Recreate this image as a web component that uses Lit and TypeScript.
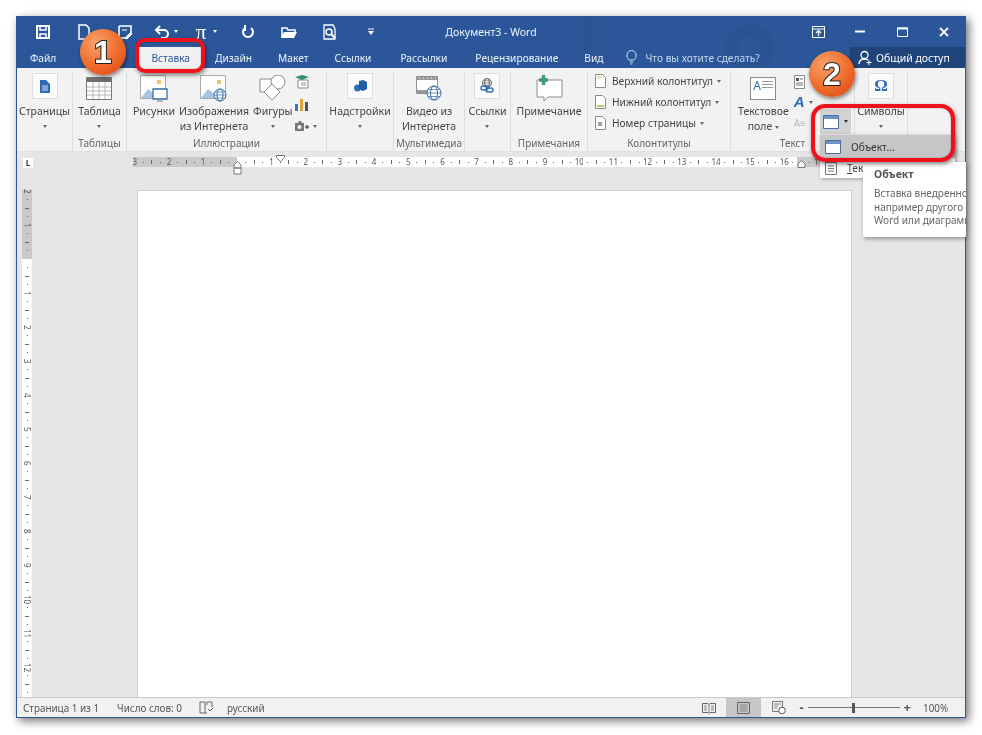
import { LitElement, css, html, svg } from "lit";
import { customElement } from "lit/decorators.js";

const BLUE = "#2b6cb5";

const icon = (w: number, h: number, body: unknown) =>
  html`<svg width=${w} height=${h} viewBox="0 0 ${w} ${h}" fill="none">${body}</svg>`;

const arrow = () => html`<span class="caret"></span>`;

// title bar icons
const qatSave = icon(16, 16, svg`<path d="M2 2h12v12H2z" stroke="#fff" stroke-width="2"/><path d="M5 2v4h6V2M5 14v-4h6v4" stroke="#fff" stroke-width="1.5"/>`);
const qatNew = icon(14, 16, svg`<path d="M2 1h7l3 3v11H2z" stroke="#fff" stroke-width="1.5"/>`);
const qatSaveAs = icon(16, 16, svg`<path d="M2 2h12v6M2 2v12h6" stroke="#fff" stroke-width="1.6"/><path d="M5 6h5M8 14l6-6 1 2-5 5z" fill="#dce6f4" stroke="#fff"/>`);
const qatUndo = icon(16, 14, svg`<path d="M6 1 2 5l4 4" stroke="#fff" stroke-width="2"/><path d="M3 5h7a4 4 0 0 1 0 8H7" stroke="#fff" stroke-width="2"/>`);
const qatRedo = icon(14, 14, svg`<path d="M10 3a5 5 0 1 1-6 0" stroke="#fff" stroke-width="2"/><path d="M4 0v5h1" stroke="#fff" stroke-width="2"/>`);
const qatOpen = icon(18, 14, svg`<path d="M2 12V3h5l1 2h7v2" stroke="#fff" stroke-width="1.5"/><path d="M1 13l3-6h13l-3 6z" fill="#fff"/>`);
const qatPreview = icon(14, 16, svg`<path d="M10 1H1v14h11V5z" stroke="#fff" stroke-width="1.3"/><circle cx="6" cy="8" r="3" stroke="#fff" stroke-width="1.5"/><path d="m8 10 4 4" stroke="#fff" stroke-width="2"/>`);
const qatCustom = icon(8, 8, svg`<path d="M1 1h6" stroke="#fff"/><path d="M1 3h6L4 7z" fill="#fff"/>`);
const restoreIcon = icon(13, 12, svg`<path d="M.5.5h12v11H.5z" stroke="#fff"/><path d="M1 3h11" stroke="#fff"/><path d="M6.5 10V5M4 7l2.5-2.5L9 7" stroke="#fff" stroke-width="1.3"/>`);
const minIcon = icon(10, 3, svg`<path d="M0 1.5h10" stroke="#fff" stroke-width="2"/>`);
const maxIcon = icon(11, 10, svg`<path d="M.5 1h10v8.5H.5z" stroke="#fff"/><path d="M0 1.5h11" stroke="#fff" stroke-width="2"/>`);
const closeIcon = icon(10, 10, svg`<path d="m1 1 8 8M9 1 1 9" stroke="#fff" stroke-width="1.8"/>`);
const bulb = icon(11, 15, svg`<path d="M3 10C1 8 .8 6.5 1 5a4.5 4.5 0 0 1 9 0c.2 1.5 0 3-2 5z" stroke="#cfe0f5"/><path d="M4 12h3M4.5 14h2" stroke="#cfe0f5"/>`);
const person = icon(15, 16, svg`<circle cx="6.5" cy="5" r="3.5" stroke="#fff" stroke-width="1.3"/><path d="M1 14c0-4 2-5 5.500-5 1.500 0 2.500.3 3.500 1" stroke="#fff" stroke-width="1.3"/><path d="M11 10v5M8.5 12.500h5" stroke="#fff"/>`);

// ribbon icons
const pagesIcon = icon(10, 13, svg`<path d="M0 0h6l4 4v9H0z" fill="${BLUE}"/><path d="M2 6h6M2 8h6M2 10h6" stroke="#fff" stroke-width=".8"/>`);
const tableIcon = icon(26, 23, svg`<path d="M.5.5h25v22H.5z" fill="#fff" stroke="#777"/><path d="M1 1h24v4H1z" fill="#6f6f6f"/><path d="M1 10h24M1 14h24M1 18h24M7 5v17M13 5v17M19 5v17" stroke="#b8b8b8"/>`);
const picBase = svg`<path d="M.5.5h25v23H.5z" fill="#fff" stroke="#a9a9a9"/><path d="M1 23l7-9 5 4 5-3 7 6v2z" fill="#a9c4e2"/><rect x="17" y="5" width="4" height="4" fill="#e9c46a"/>`;
const picturesIcon = icon(28, 27, svg`${picBase}<path d="M13 14h14v10H13z" fill="#fff" stroke="#3a6ea5" stroke-width="1.3"/><path d="M17 26h6" stroke="#777"/>`);
const globe = (x: number, y: number, r: number, c: string) => svg`<circle cx=${x} cy=${y} r=${r} fill="#fff" stroke=${c}/><ellipse cx=${x} cy=${y} rx=${r / 2} ry=${r} stroke=${c}/><path d="M${x - r} ${y}h${2 * r}M${x - r + 1} ${y - r / 2}h${2 * r - 2}M${x - r + 1} ${y + r / 2}h${2 * r - 2}" stroke=${c} stroke-width=".7"/>`;
const onlineIcon = icon(28, 27, svg`${picBase}${globe(20, 20, 6, "#3a6ea5")}`);
const shapesIcon = icon(27, 27, svg`<path d="M1 4h13v13H1z" fill="#fff" stroke="#8a8a8a"/><circle cx="19" cy="7" r="7" fill="#fff" stroke="#8a8a8a"/><path d="m13 9 8 8-8 8-8-8z" fill="#fff" stroke="#8a8a8a"/>`);
const modelsIcon = icon(15, 14, svg`<path d="M3 5h10v8H3z" fill="#fff" stroke="#888"/><path d="M0 2 7 0l7 2-7 3z" fill="#2f8f6f"/><path d="M6 8h5M6 10h5" stroke="#999"/>`);
const chartIcon = icon(13, 12, svg`<rect x="0" y="5" width="3" height="7" fill="#3a78bd"/><rect x="5" y="0" width="3" height="12" fill="#e0a53a"/><rect x="10" y="3" width="3" height="9" fill="#555"/>`);
const shotIcon = icon(14, 10, svg`<path d="M0 2h3l1-2h2l1 2h2v8H0z" fill="#777"/><circle cx="4.500" cy="6" r="2" fill="#fff"/><path d="M10 6h4M12 4v4" stroke="#555" stroke-width="1.300"/>`);
const addinIcon = icon(13, 12, svg`<circle cx="3.500" cy="8" r="3.500" fill="#2c6fb8"/><path d="M5 1l4-1 4 2v7l-4 2-4-2z" fill="#1f5fa8"/>`);
const videoIcon = icon(26, 26, svg`<path d="M.5 1.500h21v17H.5z" fill="#fff" stroke="#8d8d8d"/><path d="M1 2h20v3H1zM1 15h20v3H1z" fill="#9a9a9a"/><path d="M3 3h1M7 3h1M11 3h1M15 3h1M19 3h1" stroke="#fff"/>${globe(18, 18, 7, "#3a6ea5")}`);
const linksIcon = icon(16, 16, svg`${globe(8, 5, 4.5, "#666")}<rect x="2" y="8" width="7" height="4" rx="2" stroke="#2c6fb8" stroke-width="1.400"/><rect x="7" y="10" width="7" height="4" rx="2" stroke="#2c6fb8" stroke-width="1.400"/>`);
const commentIcon = icon(28, 26, svg`<path d="M2 5h25v17H13l-4 4v-4H2z" fill="#fff" stroke="#8d8d8d"/><path d="M4 5h9M8.500 0v10" stroke="#3f9a7d" stroke-width="3.500"/>`);
const headerIcon = icon(11, 14, svg`<path d="M.5.5h7l3 3v10H.5z" fill="#fff" stroke="#8a8a8a"/><path d="M2 2h5v3H2z" fill="#e8e2c0"/>`);
const footerIcon = icon(11, 14, svg`<path d="M.5.5h7l3 3v10H.5z" fill="#fff" stroke="#8a8a8a"/><path d="M2 10h7v2H2z" fill="#bcc86a"/>`);
const numberIcon = icon(11, 14, svg`<path d="M.5.5h7l3 3v10H.5z" fill="#fff" stroke="#8a8a8a"/><path d="M4 6v4M6 6v4M3 7h4M3 9h4" stroke="#555" stroke-width=".7"/>`);
const textboxIcon = html`<div class="tbox"><b>A</b><span></span></div>`;
const partsIcon = icon(11, 14, svg`<path d="M.5.5h10v13H.5z" fill="#fff" stroke="#8a8a8a"/><path d="M2 3h3v3H2z" fill="#555"/><path d="M6 4h3M2 8h7M2 10h7" stroke="#777"/>`);
const omega = html`<span class="omega">Ω</span>`;
const objectIcon = icon(16, 14, svg`<path d="M.5.5h15v13H.5z" fill="#fff" stroke="#4a6f9e"/><path d="M1 1h14v3H1z" fill="#6b93c4"/>`);
const textDocIcon = icon(12, 13, svg`<path d="M.5.5h11v12H.5z" fill="#fff" stroke="#777"/><path d="M3 4h6M3 6.5h6M3 9h6" stroke="#777"/>`);

// status bar icons
const bookCheck = icon(15, 13, svg`<path d="M1 1h5v11H1zM6 12h2M8 4V1h5v5" stroke="#666"/><path d="m9 8 2 2 3-3" stroke="#666"/>`);
const readIcon = icon(14, 12, svg`<path d="M.5 1.5h5.5l1 1 1-1h5.500v9h-5.500l-1 1-1-1H.5z" stroke="#666"/><path d="M7 2v9M2 4h3M2 6h3M2 8h3M9 4h3M9 6h3M9 8h3" stroke="#888"/>`);
const printIcon = icon(13, 12, svg`<path d="M.5.5h12v11H.5z" stroke="#666"/><path d="M2.500 3h8M2.500 5h8M2.500 7h8M2.500 9h8" stroke="#888"/>`);
const webIcon = icon(14, 13, svg`<path d="M.5.5h10v10H.5z" stroke="#777"/><path d="M2 3h7M2 5h4M2 7h3" stroke="#888"/><circle cx="10" cy="9.5" r="3.3" fill="#fff" stroke="#555"/>`);

const rulerCells = (from: number, to: number, greyFrom: number) => {
  const cells = [];
  for (let i = from; i < to; i++) {
    const shade = i < 0 || i >= greyFrom ? "grey" : i === 0 ? "half" : "";
    let mark: unknown = html`<i class="dot"></i>`;
    if (i % 4 === 0) mark = i === 0 ? "" : Math.abs(i) / 4;
    else if (i % 2 === 0) mark = html`<i class="bar"></i>`;
    cells.push(html`<span class="cell ${shade}">${mark}</span>`);
  }
  return cells;
};

const big = (ic: unknown, lines: unknown[], caret = false, boxed = false) => html`
  <div class="big">
    <div class="ic ${boxed ? "boxed" : ""}">${ic}</div>
    ${lines.map((l) => html`<div class="ln">${l}</div>`)}
    ${caret ? html`<div class="ln car">${arrow()}</div>` : ""}
  </div>
`;

@customElement("app-root")
export class AppRoot extends LitElement {
  static styles = css`
    :host {
      display: block;
      position: relative;
      height: 735px;
      padding: 16px;
      box-sizing: border-box;
      background: #fff;
      font-family: "Noto Sans", "Open Sans", sans-serif;
      font-size: 10.5px;
      color: #444;
      overflow: hidden;
      filter: blur(0.3px);
    }
    .window {
      width: 950px;
      height: 702px;
      box-sizing: border-box;
      border: 1px solid #2b579a;
      border-top: 0;
      display: flex;
      flex-direction: column;
      box-shadow: 3px 3px 9px rgba(0, 0, 0, 0.55);
      background: #e6e6e6;
    }
    .head {
      background:
        radial-gradient(circle at 733px 33px, transparent 11px, rgba(0, 0, 0, 0.05) 12px 24px, transparent 25px),
        linear-gradient(90deg, transparent 550px, rgba(0, 0, 0, 0.04) 570px, transparent 600px),
        #2b579a;
      color: #fff;
    }
    .title {
      height: 31px;
      display: grid;
      grid-template-columns: 1fr auto 1fr;
      align-items: center;
    }
    .qat {
      display: flex;
      padding-left: 5px;
    }
    .slot {
      width: 41px;
      display: flex;
      align-items: center;
      justify-content: center;
      gap: 4px;
    }
    .pi {
      font-family: "Liberation Serif", serif;
      font-size: 21px;
      line-height: 16px;
      margin-right: 3px;
    }
    .wcaret {
      border: 2.5px solid transparent;
      border-top: 3px solid #fff;
      border-bottom: 0;
    }
    .doc-title {
      color: #f0f4fa;
      font-size: 10.5px;
    }
    .winctl {
      display: flex;
      justify-content: flex-end;
    }
    .winctl span {
      width: 42px;
      display: flex;
      justify-content: center;
      align-items: center;
    }
    .tabs {
      height: 21px;
      display: flex;
      align-items: stretch;
      font-size: 10.2px;
    }
    .tab {
      padding: 0 13px;
      display: flex;
      align-items: center;
      color: #eef3fa;
    }
    .tab.home { padding-right: 16px; }
    .tab.on { padding-right: 12px; }
    .tab.refs { padding-right: 16px; }
    .tab.mail { padding-right: 15px; }
    .tab.on {
      background: #f1f1f1;
      color: #2b579a;
    }
    .tell {
      display: flex;
      align-items: center;
      gap: 8px;
      margin-left: 10px;
      color: #c4d6ee;
    }
    .share {
      margin-left: auto;
      width: 115px;
      box-sizing: border-box;
      background: #1f4479;
      display: flex;
      align-items: center;
      gap: 3px;
      padding-left: 8px;
      color: #fff;
      font-size: 10.5px;
    }
    .ribbon {
      height: 84px;
      flex: none;
      display: flex;
      background: #f2f2f2;
      border-bottom: 1px solid #e0e0e0;
      box-sizing: border-box;
    }
    .group {
      display: flex;
      flex-direction: column;
      box-sizing: border-box;
      border-right: 1px solid #dcdcdc;
      margin-top: 4px;
    }
    .gbody {
      height: 64px;
      flex: none;
      display: flex;
      justify-content: center;
    }
    .glabel {
      height: 15px;
      line-height: 15px;
      text-align: center;
      color: #666;
      font-size: 10px;
    }
    .g-pages { width: 56px; }
    .g-table { width: 54px; }
    .g-illus { width: 200px; }
    .g-addin { width: 67px; }
    .g-media { width: 71px; }
    .g-links { width: 46px; }
    .g-notes { width: 77px; }
    .g-head { width: 143px; }
    .g-text { width: 124px; }
    .g-sym { width: 53px; }
    .big {
      display: flex;
      flex-direction: column;
      align-items: center;
      white-space: nowrap;
      padding: 0 2px;
    }
    .ic {
      height: 32px;
      display: flex;
      align-items: center;
      justify-content: center;
    }
    .boxed {
      width: 26px;
      height: 26px;
      margin: 1px 0 5px;
      background: #fbfbfb;
      border: 1px solid #dedede;
      box-sizing: border-box;
    }
    .ln {
      height: 15px;
      line-height: 15px;
    }
    .car {
      display: flex;
      align-items: center;
    }
    .caret {
      display: inline-block;
      border: 2.5px solid transparent;
      border-top: 3px solid #666;
      border-bottom: 0;
      vertical-align: middle;
    }
    .small {
      display: flex;
      flex-direction: column;
      justify-content: space-between;
      align-items: flex-start;
      padding: 3px 0 5px 0;
    }
    .smallrow {
      display: flex;
      align-items: center;
      gap: 4px;
      white-space: nowrap;
    }
    .stack {
      display: flex;
      flex-direction: column;
      width: 100%;
      padding: 1px 0 0 7px;
      gap: 5px;
      font-size: 10.2px;
    }
    .stack .smallrow {
      height: 16px;
      gap: 6px;
    }
    .stack .caret {
      margin-left: -2px;
    }
    .tbox {
      width: 26px;
      height: 23px;
      background: #fff;
      border: 1px solid #8a8a8a;
      box-sizing: border-box;
      padding: 1px 2px;
      display: flex;
      gap: 1px;
      font-size: 12px;
      line-height: 13px;
      color: #2b6cb5;
    }
    .tbox b {
      font-weight: 400;
    }
    .tbox span {
      flex: 1;
      height: 9px;
      margin-top: 2px;
      background: repeating-linear-gradient(#999 0 1px, #fff 1px 3px);
    }
    .g-illus .gbody,
    .g-text .gbody {
      justify-content: flex-start;
    }
    .g-illus .gbody {
      padding-left: 4px;
    }
    .g-text .gbody {
      padding-left: 5px;
    }
    .g-text .small {
      padding: 3px 0 5px 3px;
    }
    .wa {
      color: #2b6cb5;
      font-family: "Liberation Sans", sans-serif;
      font-style: italic;
      font-weight: 700;
      font-size: 15px;
      line-height: 14px;
    }
    .dropcap {
      width: 22px;
      height: 16px;
      color: #bbb;
      font-size: 10px;
      line-height: 16px;
    }
    .omega {
      color: #2b6cb5;
      font-family: "Liberation Serif", serif;
      font-weight: 700;
      font-size: 17px;
    }
    .work {
      flex: 1;
      display: grid;
      grid-template-columns: 120px 1fr;
      grid-template-rows: 38px 1fr;
      min-height: 0;
      background: #e6e6e6;
    }
    .corner {
      grid-column: 1;
      grid-row: 1;
      width: 10px;
      height: 10px;
      margin: 6px 0 0 6px;
      background: #fff;
      color: #333;
      font-size: 8px;
      line-height: 10px;
      text-align: center;
      font-weight: 700;
    }
    .hruler {
      grid-column: 2;
      grid-row: 1;
      display: flex;
      height: 10px;
      margin: 5px 0 0 -4px;
      overflow: hidden;
    }
    .hruler .cell:first-child {
      margin-left: -2.5px;
    }
    .cell {
      width: 8.55px;
      flex: none;
      height: 10px;
      display: flex;
      align-items: center;
      justify-content: center;
      background: #fff;
      font-size: 8px;
      line-height: 10px;
      color: #555;
    }
    .cell.grey {
      background: #c9c9c9;
    }
    .cell.half {
      background: linear-gradient(90deg, #c9c9c9 50%, #fff 50%);
    }
    .dot {
      width: 1px;
      height: 1px;
      background: #666;
    }
    .bar {
      width: 1px;
      height: 4px;
      background: #666;
    }
    .vcol {
      grid-column: 1;
      grid-row: 2;
      padding-left: 5px;
      margin-top: -3px;
    }
    .vruler {
      width: 10px;
      height: 100%;
      display: flex;
      flex-direction: column;
      background: #fff;
    }
    .vruler .cell {
      width: 10px;
      height: 8.5px;
      writing-mode: vertical-rl;
    }
    .vruler .cell:first-child {
      background: linear-gradient(#e6e6e6 3px, #c9c9c9 3px);
    }
    .vruler .cell.half {
      background: linear-gradient(#c9c9c9 50%, #fff 50%);
    }
    .vruler .bar {
      width: 4px;
      height: 1px;
    }
    .page {
      grid-column: 2;
      grid-row: 2;
      width: 715px;
      background: #fff;
      border: 1px solid #d2d2d2;
      border-bottom: 0;
      box-sizing: border-box;
    }
    .status {
      height: 20px;
      flex: none;
      display: flex;
      align-items: center;
      background: #f1f1f1;
      border-top: 1px solid #c8c8c8;
      box-sizing: border-box;
      padding-left: 6px;
      color: #555;
      font-size: 9.9px;
    }
    .status .s1 { width: 94px; }
    .status .s2 { width: 82px; }
    .status .s3 { width: 28px; display: flex; }
    .views {
      margin-left: auto;
      display: flex;
      align-items: center;
      height: 100%;
    }
    .view {
      width: 35px;
      height: 100%;
      display: flex;
      align-items: center;
      justify-content: center;
    }
    .view.on {
      background: #c6c6c6;
    }
    .zoom {
      display: flex;
      align-items: center;
      margin-left: 3px;
      gap: 4px;
    }
    .zoom b {
      font-size: 13px;
      line-height: 13px;
      color: #555;
    }
    .slider {
      width: 92px;
      height: 1px;
      background: #777;
      display: flex;
      justify-content: center;
      align-items: center;
    }
    .slider i {
      width: 3px;
      height: 10px;
      background: #555;
    }
    .pct {
      width: 43px;
      margin-right: 11px;
      padding-left: 12px;
      box-sizing: border-box;
    }
    /* things lying over the window */
    .menu {
      position: absolute;
      left: 820px;
      top: 109px;
      width: 135px;
      z-index: 2;
    }
    .mbtn {
      width: 31px;
      height: 25px;
      background: #d2d2d2;
      display: flex;
      align-items: center;
      gap: 5px;
      padding-left: 3px;
      box-sizing: border-box;
    }
    .mbtn .caret {
      border-top-color: #333;
    }
    .mlist {
      background: #fff;
      box-shadow: 1px 1px 4px rgba(0, 0, 0, 0.35);
      margin-top: 1px;
    }
    .mitem {
      height: 20px;
      display: flex;
      align-items: center;
      gap: 10px;
      padding-left: 5px;
      white-space: nowrap;
      overflow: hidden;
      font-size: 10.2px;
    }
    .mitem.on {
      height: 23px;
      background: #c6c6c6;
      color: #333;
    }
    .mitem u {
      text-underline-offset: 1px;
    }
    .tip {
      position: absolute;
      left: 863px;
      top: 162px;
      width: 103px;
      height: 75px;
      box-sizing: border-box;
      padding: 5px 0 0 11px;
      background: #fff;
      box-shadow: 1px 2px 4px rgba(0, 0, 0, 0.35);
      z-index: 3;
      white-space: nowrap;
      overflow: hidden;
      line-height: 13.5px;
      color: #666;
      font-size: 10px;
    }
    .tip h4 {
      margin: 0 0 6px;
      font-size: 10.5px;
      line-height: 14px;
      color: #555;
    }
    .ring {
      position: absolute;
      border: 4.5px solid #f0101c;
      border-radius: 10px;
      box-sizing: border-box;
      box-shadow: 1px 2px 4px rgba(0, 0, 0, 0.5), inset 0 0 2px rgba(0, 0, 0, 0.3);
      z-index: 4;
    }
    .ring.a {
      left: 135px;
      top: 38px;
      width: 70px;
      height: 35px;
    }
    .ring.b {
      left: 811px;
      top: 104px;
      width: 144px;
      height: 58px;
      border-radius: 14px;
    }
    .badge {
      position: absolute;
      width: 46px;
      height: 46px;
      border-radius: 50%;
      background: radial-gradient(circle at 35% 30%, #f9a26a, #ee6a2a 55%, #d8400f);
      box-shadow: 1px 2px 4px rgba(0, 0, 0, 0.5);
      z-index: 5;
      display: flex;
      align-items: center;
      justify-content: center;
      font-family: "Liberation Sans", sans-serif;
      font-weight: 700;
      font-size: 32px;
      color: #fff;
      -webkit-text-stroke: 2px #222;
      paint-order: stroke fill;
    }
    .badge.a {
      left: 80px;
      top: 29px;
    }
    .badge.b {
      left: 809px;
      top: 51px;
    }
    .marker {
      position: absolute;
      z-index: 1;
    }
    .marker.a { left: 233px; top: 161px; }
    .marker.b { left: 276px; top: 155px; }
    .marker.c { left: 797px; top: 160px; }
  `;

  render() {
    return html`
      <div class="window">
        <div class="head">
          <div class="title">
            <div class="qat">
              <span class="slot">${qatSave}</span>
              <span class="slot">${qatNew}</span>
              <span class="slot">${qatSaveAs}</span>
              <span class="slot">${qatUndo}<i class="wcaret"></i></span>
              <span class="slot"><span class="pi">π</span><i class="wcaret"></i></span>
              <span class="slot">${qatRedo}</span>
              <span class="slot">${qatOpen}</span>
              <span class="slot">${qatPreview}</span>
              <span class="slot">${qatCustom}</span>
            </div>
            <div class="doc-title">Документ3 - Word</div>
            <div class="winctl">
              <span>${restoreIcon}</span><span>${minIcon}</span><span>${maxIcon}</span><span>${closeIcon}</span>
            </div>
          </div>
          <div class="tabs">
            <div class="tab">Файл</div>
            <div class="tab home">Главная</div>
            <div class="tab on">Вставка</div>
            <div class="tab">Дизайн</div>
            <div class="tab">Макет</div>
            <div class="tab refs">Ссылки</div>
            <div class="tab mail">Рассылки</div>
            <div class="tab">Рецензирование</div>
            <div class="tab">Вид</div>
            <div class="tell">${bulb}<span>Что вы хотите сделать?</span></div>
            <div class="share">${person}<span>Общий доступ</span></div>
          </div>
        </div>

        <div class="ribbon">
          <div class="group g-pages">
            <div class="gbody">${big(pagesIcon, ["Страницы"], true, true)}</div>
            <div class="glabel"></div>
          </div>
          <div class="group g-table">
            <div class="gbody">${big(tableIcon, ["Таблица"], true)}</div>
            <div class="glabel">Таблицы</div>
          </div>
          <div class="group g-illus">
            <div class="gbody">
              ${big(picturesIcon, ["Рисунки"])}
              ${big(onlineIcon, ["Изображения", "из Интернета"])}
              ${big(shapesIcon, ["Фигуры"], true)}
              <div class="small">
                ${modelsIcon}${chartIcon}
                <div class="smallrow">${shotIcon}${arrow()}</div>
              </div>
            </div>
            <div class="glabel">Иллюстрации</div>
          </div>
          <div class="group g-addin">
            <div class="gbody">${big(addinIcon, ["Надстройки"], true, true)}</div>
            <div class="glabel"></div>
          </div>
          <div class="group g-media">
            <div class="gbody">${big(videoIcon, ["Видео из", "Интернета"])}</div>
            <div class="glabel">Мультимедиа</div>
          </div>
          <div class="group g-links">
            <div class="gbody">${big(linksIcon, ["Ссылки"], true, true)}</div>
            <div class="glabel"></div>
          </div>
          <div class="group g-notes">
            <div class="gbody">${big(commentIcon, ["Примечание"])}</div>
            <div class="glabel">Примечания</div>
          </div>
          <div class="group g-head">
            <div class="gbody">
              <div class="stack">
                <div class="smallrow">${headerIcon}<span>Верхний колонтитул</span>${arrow()}</div>
                <div class="smallrow">${footerIcon}<span>Нижний колонтитул</span>${arrow()}</div>
                <div class="smallrow">${numberIcon}<span>Номер страницы</span>${arrow()}</div>
              </div>
            </div>
            <div class="glabel">Колонтитулы</div>
          </div>
          <div class="group g-text">
            <div class="gbody">
              ${big(textboxIcon, ["Текстовое", html`поле ${arrow()}`])}
              <div class="small">
                ${partsIcon}
                <div class="smallrow"><span class="wa">A</span>${arrow()}</div>
                <div class="dropcap">A≡</div>
              </div>
            </div>
            <div class="glabel">Текст</div>
          </div>
          <div class="group g-sym">
            <div class="gbody">${big(omega, ["Символы"], true, true)}</div>
            <div class="glabel"></div>
          </div>
        </div>

        <div class="work">
          <div class="corner">L</div>
          <div class="hruler">${rulerCells(-12, 80, 66)}</div>
          <div class="vcol">
            <div class="vruler">${rulerCells(-8, 52, 999)}</div>
          </div>
          <div class="page"></div>
        </div>

        <div class="status">
          <span class="s1">Страница 1 из 1</span>
          <span class="s2">Число слов: 0</span>
          <span class="s3">${bookCheck}</span>
          <span>русский</span>
          <div class="views">
            <span class="view">${readIcon}</span>
            <span class="view on">${printIcon}</span>
            <span class="view">${webIcon}</span>
            <div class="zoom">
              <b>-</b>
              <span class="slider"><i></i></span>
              <b>+</b>
            </div>
            <span class="pct">100%</span>
          </div>
        </div>
      </div>

      <svg class="marker a" width="9" height="14" viewBox="0 0 9 14" fill="#fff" stroke="#777">
        <path d="M4.5.5 8 4v3H1V4zM1 7h7v6H1z" />
      </svg>
      <svg class="marker b" width="9" height="7" viewBox="0 0 9 7" fill="#fff" stroke="#777">
        <path d="M.5.5h8v2L4.5 6.5.5 2.5z" />
      </svg>
      <svg class="marker c" width="9" height="8" viewBox="0 0 9 8" fill="#fff" stroke="#777">
        <path d="M4.5.5 8 4v3.5H1V4z" />
      </svg>

      <div class="menu">
        <div class="mbtn">${objectIcon}${arrow()}</div>
        <div class="mlist">
          <div class="mitem on">${objectIcon}<span>Объект...</span></div>
          <div class="mitem">${textDocIcon}<span><u>Т</u>екст из файла...</span></div>
        </div>
      </div>
      <div class="tip">
        <h4>Объект</h4>
        Вставка внедренного объекта,<br />
        например другого документа<br />
        Word или диаграммы Excel.
      </div>

      <div class="ring a"></div>
      <div class="ring b"></div>
      <div class="badge a">1</div>
      <div class="badge b">2</div>
    `;
  }
}
